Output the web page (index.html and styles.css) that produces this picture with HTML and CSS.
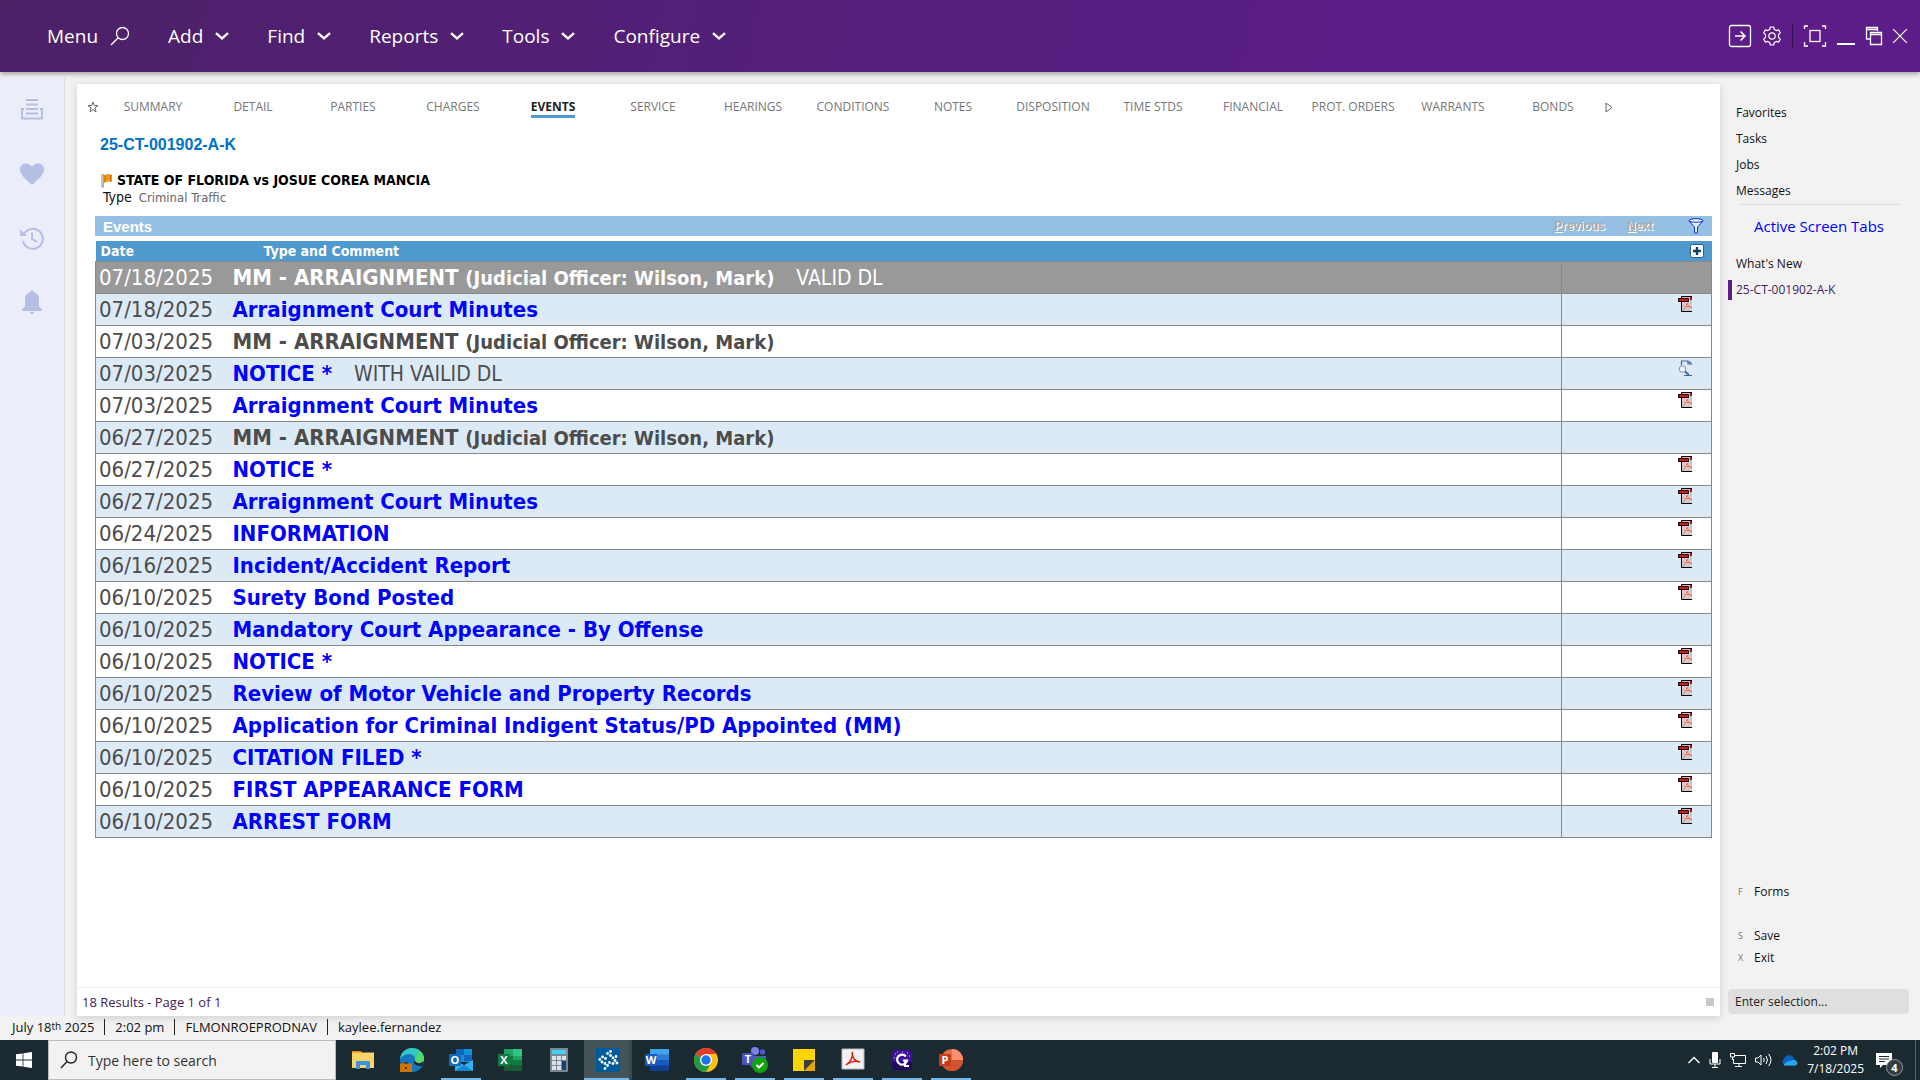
FILE: index.html
```
<!DOCTYPE html>
<html lang="en">
  <head>
    <meta charset="UTF-8" />
    <meta name="viewport" content="width=device-width, initial-scale=1.0" />
    <title>25-CT-001902-A-K - Events</title>
    <link rel="stylesheet" href="styles.css">
  </head>
  <body>
    <!-- shared icons -->
    <svg class="sprite" aria-hidden="true">
      <symbol id="chevron" viewBox="0 0 14 8">
        <path d="M1 1.2l6 5.2 6-5.2" fill="none" stroke="#fff" stroke-width="2.4" />
      </symbol>
      <symbol id="pdf" viewBox="0 0 14 16">
        <path d="M3.500 1v14.500H14V2L12 .5H3.500z" fill="#ccc" />
        <path d="M3.500 6v9.500H14M3.500 2V.5H14" fill="none" stroke="#000" />
        <path d="M5 14l3-4 1.500-3v2l3 2.500H14M8 10.500l5 .5" fill="none" stroke="#ff6a55" />
        <path d="M.5 2.500h10v3H.5z" fill="#f00" stroke="#000" />
        <path d="M12 1h2v3h-2z" fill="#b00" />
      </symbol>
      <symbol id="doc-view" viewBox="0 0 14 16">
        <path d="M3.500 1h7L14 4v11.500H3.500z" fill="#dfeaf6" />
        <path d="M3.500 5V1H10v3h4M11 1.500L13.500 4M6 15.500h8" fill="none" stroke="#41689c" stroke-width="1.200" />
        <circle cx="4.500" cy="9" r="3.300" fill="#e8f2fa" stroke="#8095ad" />
        <path d="M7 11.500l4 3.500" stroke="#41689c" stroke-width="2" />
      </symbol>
    </svg>

    <header class="topbar">
      <nav class="menu">
        <button>Menu
          <svg width="20" height="20" viewBox="0 0 20 20" fill="none" stroke="#fff" stroke-width="1.300"><circle cx="12.500" cy="7.500" r="6" /><path d="M8.200 11.800L1 19" /></svg>
        </button>
        <button>Add <svg width="14" height="8"><use href="#chevron" /></svg></button>
        <button>Find <svg width="14" height="8"><use href="#chevron" /></svg></button>
        <button>Reports <svg width="14" height="8"><use href="#chevron" /></svg></button>
        <button>Tools <svg width="14" height="8"><use href="#chevron" /></svg></button>
        <button>Configure <svg width="14" height="8"><use href="#chevron" /></svg></button>
      </nav>
      <div class="window-tools">
        <button aria-label="Go"><svg width="24" height="24" viewBox="0 0 24 24" fill="none" stroke="#fff" stroke-width="1.300"><rect x="1.500" y="1.500" width="21" height="21" rx="2" /><path d="M7 12h10M12.500 7.500L17 12l-4.500 4.500" stroke-width="1.600" /></svg></button>
        <button aria-label="Settings"><svg width="20" height="20" viewBox="0 0 20 20" fill="none" stroke="#fff" stroke-width="1.200"><path d="M8.300 1h3.400l.6 2.500 1.900 1.100 2.400-.7 1.700 2.900-1.800 1.800v2.800l1.800 1.800-1.700 2.900-2.400-.7-1.900 1.100-.6 2.500H8.300l-.6-2.500-1.900-1.100-2.400.7-1.700-2.900 1.800-1.800V8.600L1.700 6.800l1.700-2.900 2.400.7 1.900-1.100z" stroke-linejoin="round" /><circle cx="10" cy="10" r="3.200" /></svg></button>
        <span class="divider"></span>
        <button aria-label="Fit"><svg width="24" height="24" viewBox="0 0 24 24" fill="none" stroke="#fff" stroke-width="1.300"><path d="M1.500 5V2H5M19 2h3.500v3M22.500 18v4H19M5 22H1.500v-4" /><rect x="7" y="6.500" width="10" height="11" /></svg></button>
        <button aria-label="Minimize"><svg width="18" height="24" viewBox="0 0 18 24"><path d="M0 19h18v2H0z" fill="#fff" /></svg></button>
        <button aria-label="Restore"><svg width="18" height="20" viewBox="0 0 18 20" fill="none" stroke="#fff" stroke-width="1.300"><path d="M5 13H1.500V1.500h11V5M1.500 3.500h11" /><path d="M5.500 6.500h11v12h-11zM5.500 8.500h11" /></svg></button>
        <button aria-label="Close"><svg width="14" height="14" viewBox="0 0 14 14" stroke="#fff" stroke-width="1.200"><path d="M0 0l14 14M14 0L0 14" /></svg></button>
      </div>
    </header>

    <div class="workspace">
      <aside class="rail">
        <button aria-label="Inbox"><svg width="24" height="24" viewBox="0 0 24 24" fill="#b5bee4"><path d="M6 1h12v2H6zM6 5.500h12v2H6zM6 10h12v2H6zM6 14.500h12v2H6z" /><path d="M4 11H2v9.500h20V11h-2" fill="none" stroke="#b5bee4" stroke-width="2" /></svg></button>
        <button aria-label="Favorites"><svg width="24" height="24" viewBox="0 0 24 24" fill="#b5bee4"><path d="M12 23C5 16.500 0 12.500 0 7.500 0 4 2.700 1.500 6 1.500c2.400 0 4.600 1.200 6 3.200 1.400-2 3.600-3.200 6-3.200 3.300 0 6 2.500 6 6 0 5-5 9-12 15.500z" /></svg></button>
        <button aria-label="History"><svg width="24" height="24" viewBox="0 0 24 24" fill="none" stroke="#b5bee4" stroke-width="2"><path d="M4 8a10 10 0 1 1-1 7" /><path d="M12 6.500V13l5 3" /><path d="M0 3v7h7z" fill="#b5bee4" stroke="none" /></svg></button>
        <button aria-label="Alerts"><svg width="24" height="24" viewBox="0 0 24 24" fill="#b5bee4"><path d="M12 0c1 0 1.500.8 1.500 2 3.500.8 5.500 3.500 5.500 7v7.500l3 3V21H2v-1.500l3-3V9c0-3.500 2-6.200 5.500-7 0-1.200.5-2 1.500-2zM10 22h4c0 1.500-1 2-2 2s-2-.5-2-2z" /></svg></button>
      </aside>

      <main class="panel">
        <nav class="tabs">
          <button class="star" aria-label="Add to favorites"><svg width="12" height="12" viewBox="0 0 12 12" fill="none" stroke="#666"><path d="M6 1l1.300 3.600h3.700L8 6.900l1.100 3.900L6 8.500l-3.100 2.300L4 6.900 1 4.600h3.700z" /></svg></button>
          <a href="#">SUMMARY</a>
          <a href="#">DETAIL</a>
          <a href="#">PARTIES</a>
          <a href="#">CHARGES</a>
          <a href="#" class="active"><span>EVENTS</span></a>
          <a href="#">SERVICE</a>
          <a href="#">HEARINGS</a>
          <a href="#">CONDITIONS</a>
          <a href="#">NOTES</a>
          <a href="#">DISPOSITION</a>
          <a href="#">TIME STDS</a>
          <a href="#">FINANCIAL</a>
          <a href="#">PROT. ORDERS</a>
          <a href="#">WARRANTS</a>
          <a href="#">BONDS</a>
          <button class="more" aria-label="More tabs"><svg width="8" height="11" viewBox="0 0 8 11" fill="none" stroke="#666"><path d="M1 1l6 4.500L1 10z" /></svg></button>
        </nav>

        <section class="case">
          <h1>25-CT-001902-A-K</h1>
          <h2>
            <svg width="13" height="15" viewBox="0 0 13 15"><path d="M1 1h3v13.500H1z" fill="#aaa" /><path d="M2 1v13" stroke="#ddd" /><path d="M4 2l4-1 4 .5V9L8 8.500 4 10z" fill="#f49a12" /><path d="M5 2.500v6M10.500 2v6" stroke="#c46a00" /></svg>
            STATE OF FLORIDA vs JOSUE COREA MANCIA
          </h2>
          <p>Type <span>Criminal Traffic</span></p>
        </section>

        <section class="events">
          <div class="events-bar">
            <h3>Events</h3>
            <button class="page-link" disabled><u>P</u>revious</button>
            <button class="page-link" disabled><u>N</u>ext</button>
            <button class="filter" aria-label="Filter"><svg width="16" height="16" viewBox="0 0 16 16" fill="#e8f3ff" stroke="#0b2fd8"><path d="M1 3l5.500 6v6h3V9L15 3" /><ellipse cx="8" cy="2.500" rx="7" ry="1.800" /></svg></button>
          </div>
          <table>
            <thead>
              <tr>
                <th class="date">Date</th>
                <th class="type">Type and Comment</th>
                <th class="spare"></th>
                <th class="doc"><button aria-label="Add event"><svg width="14" height="14" viewBox="0 0 14 14"><rect x=".5" y=".5" width="13" height="13" rx="2" fill="#fff" stroke="#1f5f92" /><path d="M7 3v8M3 7h8" stroke="#0d3f6b" stroke-width="2.400" /></svg></button></th>
              </tr>
            </thead>
            <tbody>
              <tr class="selected"><td>07/18/2025</td><td><b>MM - ARRAIGNMENT <small>(Judicial Officer: Wilson, Mark)</small></b><span>VALID DL</span></td><td></td><td></td></tr>
              <tr><td>07/18/2025</td><td><a href="#">Arraignment Court Minutes</a></td><td></td><td><svg width="14" height="16"><use href="#pdf" /></svg></td></tr>
              <tr><td>07/03/2025</td><td><b>MM - ARRAIGNMENT <small>(Judicial Officer: Wilson, Mark)</small></b></td><td></td><td></td></tr>
              <tr><td>07/03/2025</td><td><a href="#">NOTICE *</a><span>WITH VAILID DL</span></td><td></td><td><svg width="14" height="16"><use href="#doc-view" /></svg></td></tr>
              <tr><td>07/03/2025</td><td><a href="#">Arraignment Court Minutes</a></td><td></td><td><svg width="14" height="16"><use href="#pdf" /></svg></td></tr>
              <tr><td>06/27/2025</td><td><b>MM - ARRAIGNMENT <small>(Judicial Officer: Wilson, Mark)</small></b></td><td></td><td></td></tr>
              <tr><td>06/27/2025</td><td><a href="#">NOTICE *</a></td><td></td><td><svg width="14" height="16"><use href="#pdf" /></svg></td></tr>
              <tr><td>06/27/2025</td><td><a href="#">Arraignment Court Minutes</a></td><td></td><td><svg width="14" height="16"><use href="#pdf" /></svg></td></tr>
              <tr><td>06/24/2025</td><td><a href="#">INFORMATION</a></td><td></td><td><svg width="14" height="16"><use href="#pdf" /></svg></td></tr>
              <tr><td>06/16/2025</td><td><a href="#">Incident/Accident Report</a></td><td></td><td><svg width="14" height="16"><use href="#pdf" /></svg></td></tr>
              <tr><td>06/10/2025</td><td><a href="#">Surety Bond Posted</a></td><td></td><td><svg width="14" height="16"><use href="#pdf" /></svg></td></tr>
              <tr><td>06/10/2025</td><td><a href="#">Mandatory Court Appearance - By Offense</a></td><td></td><td></td></tr>
              <tr><td>06/10/2025</td><td><a href="#">NOTICE *</a></td><td></td><td><svg width="14" height="16"><use href="#pdf" /></svg></td></tr>
              <tr><td>06/10/2025</td><td><a href="#">Review of Motor Vehicle and Property Records</a></td><td></td><td><svg width="14" height="16"><use href="#pdf" /></svg></td></tr>
              <tr><td>06/10/2025</td><td><a href="#">Application for Criminal Indigent Status/PD Appointed (MM)</a></td><td></td><td><svg width="14" height="16"><use href="#pdf" /></svg></td></tr>
              <tr><td>06/10/2025</td><td><a href="#">CITATION FILED *</a></td><td></td><td><svg width="14" height="16"><use href="#pdf" /></svg></td></tr>
              <tr><td>06/10/2025</td><td><a href="#">FIRST APPEARANCE FORM</a></td><td></td><td><svg width="14" height="16"><use href="#pdf" /></svg></td></tr>
              <tr><td>06/10/2025</td><td><a href="#">ARREST FORM</a></td><td></td><td><svg width="14" height="16"><use href="#pdf" /></svg></td></tr>
            </tbody>
          </table>
        </section>

        <footer class="panel-foot">
          <span>18 Results - Page 1 of 1</span>
          <i class="grip"></i>
        </footer>
      </main>

      <aside class="side">
        <ul class="links">
          <li><a href="#">Favorites</a></li>
          <li><a href="#">Tasks</a></li>
          <li><a href="#">Jobs</a></li>
          <li><a href="#">Messages</a></li>
        </ul>
        <h4>Active Screen Tabs</h4>
        <ul class="links">
          <li><a href="#">What's New</a></li>
          <li class="current"><a href="#">25-CT-001902-A-K</a></li>
        </ul>
        <div class="commands">
          <button class="forms"><kbd>F</kbd>Forms</button>
          <button><kbd>S</kbd>Save</button>
          <button><kbd>X</kbd>Exit</button>
        </div>
        <input type="text" aria-label="Selection" placeholder="Enter selection..." />
      </aside>
    </div>

    <div class="status">
      <span>July 18<sup>th</sup> 2025</span>
      <span>2:02 pm</span>
      <span>FLMONROEPRODNAV</span>
      <span>kaylee.fernandez</span>
    </div>

    <footer class="taskbar">
      <button class="start" aria-label="Start"><svg width="16" height="16" viewBox="0 0 16 16" fill="#fff"><path d="M0 2.300L6.600 1.400v6.200H0zM7.400 1.300L16 0v7.600H7.400zM0 8.400h6.600v6.200L0 13.700zM7.400 8.400H16V16l-8.600-1.300z" /></svg></button>
      <label class="search">
        <svg width="18" height="18" viewBox="0 0 18 18" fill="none" stroke="#222" stroke-width="1.400"><circle cx="11" cy="6.500" r="5.500" /><path d="M7 10.500L1 17" /></svg>
        <input type="text" aria-label="Search" placeholder="Type here to search" />
      </label>
      <div class="apps">
        <button aria-label="File Explorer"><svg width="24" height="24" viewBox="0 0 24 24"><path d="M1 3h9l1 2H1z" fill="#d99312" /><path d="M1 4.500h22V20H1z" fill="#fdd368" /><path d="M5 21v-7q0-1 1-1h12q1 0 1 1v7h-4v-4H9v4z" fill="#3b93dc" /></svg></button>
        <button aria-label="Edge"><svg width="24" height="24" viewBox="0 0 24 24"><circle cx="12" cy="12" r="12" fill="#1576c4" /><path d="M0 11C1 4 6 0 12 0c7 0 12 5 12 10 0 4-3 6-6 6-3 0-4-1-4-2s1-1 1-3c0-3-3-5-6-5-4 0-7 2-9 5z" fill="#35c8c0" /><path d="M19 2.500c3 2 5 5 5 8 0 3.500-3 5.500-6 5.500-1.500 0-3-.4-3.700-1z" fill="#57d66a" /><path d="M14 12c-1 4 2 6 8 6l1-2v-3c-2 3-6 3-9-1z" fill="#1b2a30" /><path d="M0 15.500h12V24H0z" fill="#c97508" /><path d="M4 15.500V14h4v1.500M5 19h2v2H5z" fill="#5a3000" /></svg></button>
        <button class="open" aria-label="Outlook"><svg width="24" height="24" viewBox="0 0 24 24"><path d="M7 1h16v13H7z" fill="#1490df" /><path d="M7 1h8v6H7zM15 7h8v6h-8z" fill="#0f65ba" /><path d="M6 12l9 5 9-5v11H6z" fill="#35b0f0" /><path d="M6 23l9-6 9 6z" fill="#1786d5" /><rect y="6" width="12" height="12" rx="1" fill="#0f6cbd" /><text x="6" y="16" class="glyph">O</text></svg></button>
        <button aria-label="Excel"><svg width="24" height="24" viewBox="0 0 24 24"><path d="M6 1h18v22H6z" fill="#21a366" /><path d="M15 1h9v7h-9z" fill="#33c481" /><path d="M6 12h18v11H6z" fill="#185c37" /><path d="M6 8h9v8H6zM15 12h9v5h-9z" fill="#107c41" /><rect y="6" width="12" height="12" rx="1" fill="#107c41" /><text x="6" y="16" class="glyph">X</text></svg></button>
        <button aria-label="Calculator"><svg width="24" height="24" viewBox="0 0 24 24"><rect x="3" width="18" height="24" rx="1" fill="#7b8792" /><path d="M5 2h14v4H5z" fill="#3fd2f5" /><path d="M5 8h4v4H5zM10 8h4v4h-4zM15 8h4v4h-4zM5 13h4v4H5zM10 13h4v4h-4zM5 18h4v4H5zM10 18h4v4h-4z" fill="#dfe3e6" /><path d="M15 13h4v9h-4z" fill="#15407e" /></svg></button>
        <button class="open current" aria-label="Case Manager"><svg width="24" height="24" viewBox="0 0 24 24"><path d="M0 0h24v24H0z" fill="#005b9a" /><g fill="#fff"><circle cx="14.500" cy="3.500" r="1.400" /><circle cx="11.500" cy="5.500" r="1.400" /><circle cx="14.500" cy="7.500" r="1.400" /><circle cx="6.500" cy="9" r="1.400" /><circle cx="9.500" cy="10.500" r="1.400" /><circle cx="3.800" cy="11.500" r="1.400" /><circle cx="6" cy="14" r="1.400" /><circle cx="9" cy="15.500" r="1.400" /><circle cx="17" cy="10" r="1.400" /><circle cx="20" cy="8.500" r="1.400" /><circle cx="19" cy="12.500" r="1.400" /><circle cx="21" cy="15" r="1.400" /><circle cx="17" cy="15.500" r="1.400" /><circle cx="13.500" cy="14.500" r="1.400" /><circle cx="11.500" cy="17.500" r="1.400" /><circle cx="9" cy="20.500" r="1.400" /></g></svg></button>
        <button aria-label="Word"><svg width="24" height="24" viewBox="0 0 24 24"><path d="M5 1h19v6H5z" fill="#41a5ee" /><path d="M5 6.500h19V12H5z" fill="#2b7cd3" /><path d="M5 12h19v6H5z" fill="#185abd" /><path d="M5 17.500h19V23H5z" fill="#103f91" /><rect y="6" width="12" height="12" rx="1" fill="#185abd" /><text x="6" y="16" class="glyph">W</text></svg></button>
        <button class="open" aria-label="Chrome"><svg width="24" height="24" viewBox="0 0 24 24"><circle cx="12" cy="12" r="12" fill="#fbc116" /><path d="M12 12L1.600 6A12 12 0 0 1 22.400 6z" fill="#e33b2e" /><path d="M12 12L1.600 6A12 12 0 0 0 12 24l5-9z" fill="#249a41" /><path d="M12 6h10.400l-5 9z" fill="#fbc116" /><circle cx="12" cy="12" r="6" fill="#fff" /><circle cx="12" cy="12" r="4.700" fill="#1a73e8" /></svg></button>
        <button class="open" aria-label="Teams"><svg width="26" height="26" viewBox="0 0 26 26"><circle cx="13" cy="4" r="4" fill="#7b83eb" /><circle cx="20.500" cy="5" r="2.700" fill="#5059c9" /><path d="M8 9h16v9q-3 5-8 5t-8-5z" fill="#5059c9" /><rect y="6" width="12" height="12" rx="1" fill="#4b53bc" /><text x="6" y="16" class="glyph">T</text><circle cx="18" cy="18" r="8" fill="#13a10e" /><path d="M14.500 18l2.500 2.500 4.500-4.500" fill="none" stroke="#fff" stroke-width="2" /></svg></button>
        <button class="open" aria-label="Sticky Notes"><svg width="24" height="24" viewBox="0 0 24 24"><path d="M1 1h22v22H1z" fill="#ffd400" /><path d="M12 12h11L12 23z" fill="#3c3c3c" /><path d="M23 12v11H12z" fill="#e0a800" /></svg></button>
        <button class="open" aria-label="Acrobat"><svg width="24" height="24" viewBox="0 0 24 24"><path d="M1 1h22v20H1z" fill="#f2f2f2" stroke="#bbb" /><path d="M5 17c4-2 7-8 6.500-13C10 8 14 14 19 14c-4-2-10 0-14 3z" fill="none" stroke="#e2231a" stroke-width="1.500" /></svg></button>
        <button class="open" aria-label="G"><svg width="24" height="24" viewBox="0 0 24 24"><rect x="2" y="2" width="20" height="20" rx="4" fill="#3c1399" /><path d="M2 14h20v4q0 4-4 4H6q-4 0-4-4z" fill="#22085f" /><path d="M16 8.500a5 5 0 1 0 1 4h-4M15 12v6h4" fill="none" stroke="#fff" stroke-width="2.200" /><path d="M5 6h1M7 4h1M12 4h1M17 5h1M4 10h1M19 8h1" stroke="#d9c8ff" /></svg></button>
        <button class="open" aria-label="PowerPoint"><svg width="24" height="24" viewBox="0 0 24 24"><circle cx="13" cy="12" r="11" fill="#ed6c47" /><path d="M13 1a11 11 0 0 1 11 11H13z" fill="#ff8f6b" /><path d="M24 12a11 11 0 0 1-22 0z" fill="#d35230" /><rect y="6" width="12" height="12" rx="1" fill="#c43e1c" /><text x="6" y="16" class="glyph">P</text></svg></button>
      </div>
      <div class="tray">
        <svg width="12" height="8" viewBox="0 0 12 8" fill="none" stroke="#fff" stroke-width="1.300"><path d="M.5 7L6 1.500 11.500 7" /></svg>
        <svg width="12" height="16" viewBox="0 0 12 16" fill="#fff"><rect x="3" width="6" height="11" rx="1" /><path d="M1 7v5h10V7M6 12v4M3 15.500h6" fill="none" stroke="#fff" /></svg>
        <svg width="16" height="14" viewBox="0 0 16 14" fill="none" stroke="#fff"><path d="M5 2.500h10.500v8H3.500V6M9 10.500v3M5 13.500h7M.5.5h4v3.500h-4zM2.500 4v3" /></svg>
        <svg width="17" height="14" viewBox="0 0 17 14" fill="none" stroke="#fff"><path d="M.5 5H3l3-3v10L3 9H.5zM8.500 5q1.500 2 0 4M11 3q3 4 0 8M13.500 1q5 6 0 12" /></svg>
        <svg width="17" height="11" viewBox="0 0 17 11"><path d="M4 10.500a4 4 0 0 1-.5-7.200A5 5 0 0 1 13 4a3.500 3.500 0 0 1 .5 6.500z" fill="#0a62bd" /><path d="M3 10.500Q3 7 9 6q5-2.500 7.500 1.500 0 3-3 3z" fill="#28a8ea" /></svg>
        <time>2:02 PM<br />7/18/2025</time>
        <button class="notices" aria-label="4 notifications">
          <svg width="16" height="16" viewBox="0 0 16 16"><path d="M0 1h16v12H7l-3 3v-3H0z" fill="#fff" /><path d="M3 4.500h10M3 7h10M3 9.500h6" stroke="#1b2a30" /></svg>
          <span>4</span>
        </button>
        <span class="show-desktop"></span>
      </div>
    </footer>
  </body>
</html>
```
FILE: styles.css
```
* {
  box-sizing: border-box;
}

body {
  margin: 0;
  height: 100vh;
  display: flex;
  flex-direction: column;
  background: #f2f2f2;
  color: #111;
  font-family: "Open Sans", "Noto Sans", sans-serif;
  font-size: 12px;
  overflow: hidden;
}

button {
  display: flex;
  align-items: center;
  margin: 0;
  padding: 0;
  border: none;
  background: none;
  font: inherit;
  color: inherit;
}

a {
  color: inherit;
  text-decoration: none;
}

h1,
h2,
h3,
h4,
p,
ul {
  margin: 0;
  padding: 0;
}

svg {
  display: block;
  flex: none;
}

.sprite {
  position: absolute;
  width: 0;
  height: 0;
}

/* top bar */
.topbar {
  flex: none;
  height: 72px;
  display: flex;
  align-items: center;
  justify-content: space-between;
  padding: 0 13px 0 47px;
  background: linear-gradient(100deg, #4c2168, #561e7e 50%, #5c1d89 80%);
  box-shadow: 0 2px 5px rgba(0, 0, 0, 0.35);
  z-index: 1;
}

.menu {
  display: flex;
  gap: 38px;
  color: #fff;
  font-size: 19px;
}

.menu button {
  gap: 12px;
}

.window-tools {
  display: flex;
  align-items: center;
  gap: 10px;
}

.divider {
  width: 1px;
  height: 24px;
  background: #34104f;
}

/* workspace */
.workspace {
  flex: 1;
  min-height: 0;
  display: flex;
}

.rail {
  flex: none;
  width: 65px;
  margin-top: 6px;
  padding-top: 20px;
  display: flex;
  flex-direction: column;
  align-items: center;
  gap: 40px;
  background: #ebeef8;
  border-right: 1px solid #ddd;
}

.panel {
  flex: 1;
  min-width: 0;
  display: flex;
  flex-direction: column;
  margin: 12px 0 0 12px;
  background: #fff;
  box-shadow: 0 2px 8px rgba(0, 0, 0, 0.15);
}

.tabs {
  display: flex;
  align-items: center;
  height: 46px;
  padding-left: 10px;
  color: #777;
}

.tabs a {
  flex: 0 1 100px;
  line-height: 16px;
  text-align: center;
  white-space: nowrap;
}

.tabs .star {
  width: 16px;
}

.tabs .active {
  padding-top: 3px;
  color: #222;
  font-weight: 700;
}

.tabs .more {
  margin-left: 2px;
}

.active span {
  display: inline-block;
  border-bottom: 3px solid #4e99ce;
}

.case {
  padding: 5px 23px 0;
  font-family: "DejaVu Sans Condensed", "DejaVu Sans", sans-serif;
}

.case h1 {
  font: 700 16px/20px "Liberation Sans", Arial, sans-serif;
  color: #0073c8;
}

.case h2 {
  display: flex;
  align-items: center;
  gap: 4px;
  margin-top: 16px;
  font-size: 14px;
  line-height: 18px;
  color: #000;
}

.case p {
  height: 16px;
  padding-left: 3px;
  font-size: 14px;
  line-height: 16px;
}

.case p span {
  margin-left: 3px;
  color: #666;
  font-size: 13px;
}

/* events grid */
.events {
  flex: 1;
  padding: 11px 8px 0 18px;
  font-family: "DejaVu Sans Condensed", "DejaVu Sans", sans-serif;
}

.events-bar {
  display: flex;
  align-items: center;
  height: 20px;
  margin-bottom: 5px;
  padding: 0 8px;
  background: #95c0e3;
  color: #fff;
  font-family: "Liberation Sans", Arial, sans-serif;
}

.events-bar h3 {
  flex: 1;
  font-size: 15px;
}

.page-link {
  margin-right: 22px;
  font-size: 12px;
  font-weight: 700;
  color: #aaa;
  text-shadow: 1px 1px #fff;
}

.filter {
  margin-left: 13px;
}

table {
  width: 100%;
  table-layout: fixed;
  border-collapse: collapse;
  color: #4c4c4c;
}

th {
  height: 20px;
  padding: 1px 5px 0;
  background: #4e99ce;
  color: #fff;
  font-size: 14px;
  line-height: 18px;
  text-align: left;
}

.date {
  width: 132px;
}

.type {
  padding-left: 36px;
}

.spare {
  width: 1px;
  padding: 0;
}

.doc {
  width: 150px;
}

.doc button {
  margin-left: auto;
  margin-right: 3px;
}

td {
  height: 32px;
  padding: 2px 4px 0 3px;
  border-top: 1px solid #888;
  border-bottom: 1px solid #888;
  font-size: 22px;
  line-height: 28px;
  white-space: nowrap;
}

td:first-child {
  border-left: 1px solid #888;
}

td:nth-child(2) {
  padding-left: 5px;
}

td:nth-child(3) {
  padding: 0;
}

td:last-child {
  border: 1px solid #888;
  padding: 0 19px 0 0;
  vertical-align: top;
}

td svg {
  margin: 2px 0 0 auto;
}

td a {
  color: #00f;
  font-weight: 700;
}

td small {
  font-size: 20px;
  line-height: 20px;
}

td span {
  margin-left: 22px;
  font-size: 21px;
  line-height: 20px;
}

tbody tr:nth-child(even) {
  background: #dceaf6;
}

tbody .selected {
  background: #999;
  color: #fff;
}

.panel-foot {
  display: flex;
  align-items: center;
  justify-content: space-between;
  height: 29px;
  padding: 0 6px 0 5px;
  border-top: 1px solid #eee;
  color: #43215c;
  font-size: 13px;
}

.grip {
  width: 8px;
  height: 8px;
  background: #c8c8c8;
}

/* right side */
.side {
  flex: none;
  width: 200px;
  display: flex;
  flex-direction: column;
  padding: 31px 11px 2px 8px;
}

.links {
  list-style: none;
}

.links li {
  height: 20px;
  margin-bottom: 6px;
  padding-left: 8px;
  line-height: 20px;
}

.links .current {
  padding-left: 4px;
  border-left: 4px solid #5c1d89;
  color: #43215c;
}

.side h4 {
  margin: -3px 9px 16px 12px;
  padding: 9px 0 0 14px;
  border-top: 1px solid #ddd;
  color: #00f;
  font-size: 15px;
  font-weight: 400;
  line-height: 24px;
  white-space: nowrap;
}

.commands {
  margin-top: auto;
  margin-bottom: 21px;
}

.commands button {
  height: 22px;
  padding-left: 10px;
}

.commands .forms {
  margin-bottom: 22px;
}

kbd {
  width: 16px;
  color: #777;
  font-family: inherit;
  font-size: 9px;
  text-align: left;
}

.side input {
  width: 100%;
  height: 25px;
  padding: 0 7px;
  border: none;
  border-radius: 4px;
  background: #dfdfdf;
  font: inherit;
}

.side input::placeholder {
  color: #222;
}

.status {
  flex: none;
  height: 24px;
  display: flex;
  align-items: center;
  padding: 0 12px 2px;
  font-size: 13px;
  line-height: 16px;
}

.status span + span {
  margin-left: 10px;
  padding-left: 10px;
  border-left: 1px solid #222;
}

sup {
  font-size: 10px;
  line-height: 1;
  vertical-align: 2px;
}

/* taskbar */
.taskbar {
  flex: none;
  height: 40px;
  display: flex;
  background: #1b2a30;
  color: #fff;
}

.start {
  width: 48px;
  justify-content: center;
}

.search {
  width: 288px;
  display: flex;
  align-items: center;
  gap: 10px;
  padding-left: 11px;
  background: #f2f2f2;
  border: 1px solid #bbb;
}

.search input {
  flex: 1;
  min-width: 0;
  padding: 0;
  border: none;
  background: none;
  font: inherit;
  font-size: 14px;
}

.search input::placeholder {
  color: #333;
}

.apps {
  display: flex;
  flex: 1;
  gap: 1px;
  padding-left: 3px;
}

.apps button {
  width: 48px;
  justify-content: center;
}

.apps .open {
  background: linear-gradient(#76b9ed, #76b9ed) bottom / 40px 2px no-repeat;
}

.apps .current {
  background: linear-gradient(#76b9ed, #76b9ed) bottom / 48px 2px no-repeat #455458;
  box-shadow: inset -3px 0 #3a494e;
}

.glyph {
  fill: #fff;
  font: 700 11px "Open Sans", sans-serif;
  text-anchor: middle;
}

.tray {
  display: flex;
  align-items: center;
  gap: 9px;
}

.tray time {
  margin-right: 3px;
  text-align: center;
  line-height: 18px;
}

.notices {
  position: relative;
  width: 27px;
  height: 24px;
}

.notices span {
  position: absolute;
  right: 0;
  bottom: -4px;
  width: 17px;
  height: 17px;
  border: 1px solid #999;
  border-radius: 50%;
  background: #333c40;
  font-weight: 700;
  font-size: 11px;
  line-height: 15px;
  text-align: center;
}

.show-desktop {
  width: 5px;
  height: 40px;
  margin-left: 3px;
  border-left: 1px solid #55636a;
}
```
